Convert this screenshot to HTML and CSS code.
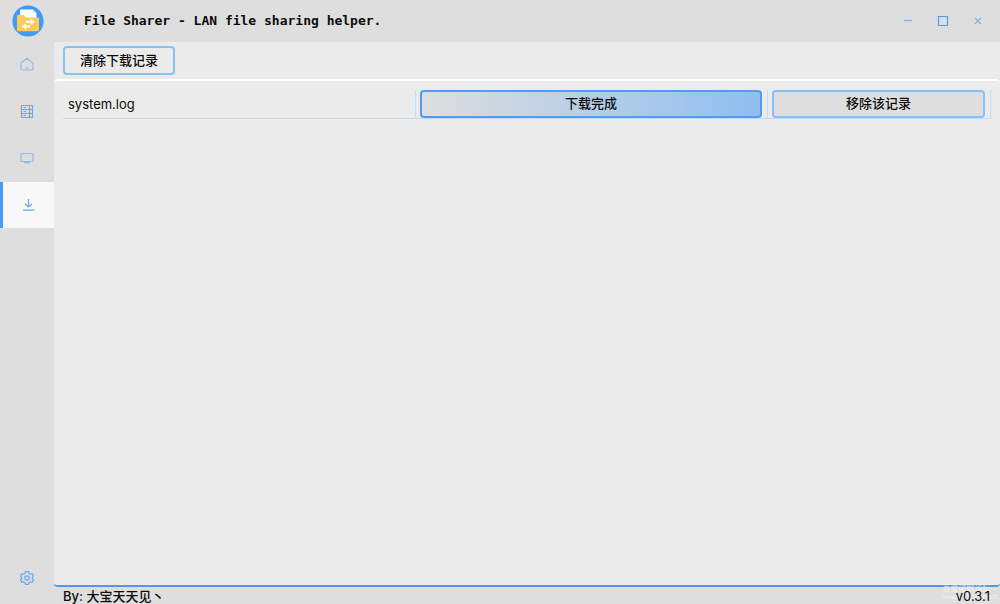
FILE: index.html
```html
<!DOCTYPE html>
<html lang="zh-CN">
<head>
<meta charset="utf-8">
<title>File Sharer</title>
<link rel="stylesheet" href="styles.css">
</head>
<body>
<div class="app">
  <aside class="sidebar">
    <div class="brand">
      <svg class="logo" viewBox="0 0 32 32" aria-hidden="true">
        <circle cx="16" cy="16" r="15.6" fill="#3f9bf5"/>
        <path d="M8 5.500Q8 4.500 9 4.500H21L24.500 8V16H8Z" fill="#fff"/>
        <path d="M21 4.500V8H24.500Z" fill="#cfe4fa"/>
        <path d="M5 11.200Q5 10 6.200 10H12L14 12.500H25.800Q27 12.500 27 13.700V25Q27 26.300 25.700 26.300H6.300Q5 26.300 5 25Z" fill="#fdcb5a"/>
        <path d="M14 15.800H18.500V13.800L22.800 16.900 18.500 19.800V17.800H14ZM18 20.500H14V18.500L9.700 21.600 14 24.500V22.500H18Z" fill="#fff"/>
      </svg>
    </div>
    <nav class="nav">
      <button class="nav-item" type="button" aria-label="主页">
        <svg class="icon" viewBox="0 0 14 14"><path d="M1 6 7 1.300 13 6V11.500Q13 13 11.500 13H2.500Q1 13 1 11.500ZM5 11H9"/></svg>
      </button>
      <button class="nav-item" type="button" aria-label="文件列表">
        <svg class="icon strong" viewBox="0 0 14 14"><path d="M1.500 1.500H12.500V13.500H1.500ZM1.500 5.500H12.500M1.500 9.500H12.500M9.500 1.500V13.500M3.500 3.500H6M3.500 7.500H6M3.500 11.500H6"/></svg>
      </button>
      <button class="nav-item" type="button" aria-label="客户端">
        <svg class="icon" viewBox="0 0 14 14"><path d="M2 2.500H12Q13 2.500 13 3.500V9.500Q13 10.500 12 10.500H2Q1 10.500 1 9.500V3.500Q1 2.500 2 2.500ZM4 11.700H10"/></svg>
      </button>
      <button class="nav-item active" type="button" aria-label="下载">
        <svg class="icon strong" viewBox="0 0 14 14"><path d="M6.500 1V9M3 5.700 6.500 9 10 5.700M1 12.200H12.500"/></svg>
      </button>
    </nav>
    <button class="nav-item" type="button" aria-label="设置">
      <svg class="icon strong" viewBox="0 0 14 14"><path d="M5.500 .7H8.500L9.100 2.500 10.400 3.200 12.200 2.700 13.500 5.200 12.200 6.500V7.500L13.500 8.800 12.200 11.300 10.400 10.800 9.100 11.500 8.500 13.300H5.500L4.900 11.500 3.600 10.800 1.800 11.300 .5 8.800 1.800 7.500V6.500L.5 5.200 1.800 2.700 3.600 3.200 4.900 2.500Z"/><circle cx="7" cy="7" r="2.200"/></svg>
    </button>
  </aside>
  <div class="main">
    <header class="titlebar">
      <h1 class="title">File Sharer - LAN file sharing helper.</h1>
      <div class="window-controls">
        <button class="win" type="button" aria-label="最小化"><svg class="win-icon" viewBox="0 0 12 12"><path d="M2 5.500H10"/></svg></button>
        <button class="win" type="button" aria-label="最大化"><svg class="win-icon max" viewBox="0 0 12 12"><path d="M1.500 1.500H10.500V10.500H1.500Z"/></svg></button>
        <button class="win" type="button" aria-label="关闭"><svg class="win-icon" viewBox="0 0 12 12"><path d="M3 3 9 9M9 3 3 9"/></svg></button>
      </div>
    </header>
    <div class="toolbar">
      <button class="btn clear" type="button">清除下载记录</button>
    </div>
    <main class="panel">
      <table class="records">
        <colgroup><col class="col-name"><col class="col-state"><col class="col-action"></colgroup>
        <tbody>
          <tr>
            <td class="name">system.log</td>
            <td><button class="btn done" type="button">下载完成</button></td>
            <td><button class="btn" type="button">移除该记录</button></td>
          </tr>
        </tbody>
      </table>
    </main>
    <footer class="footer">
      <span>By: 大宝天天见丶</span>
      <div class="watermark">吾爱破解论坛<br>www.52pojie.cn</div>
      <span class="version">v0.3.1</span>
    </footer>
  </div>
</div>
</body>
</html>
```
FILE: styles.css
```css
* {
  box-sizing: border-box;
}

body {
  margin: 0;
  background: #dedede;
  color: #0c0c0c;
  font: 500 13px/16px Inter, "Noto Sans CJK SC", sans-serif;
}

button {
  margin: 0;
  color: inherit;
  font: inherit;
}

.app {
  display: flex;
  height: 100vh;
  overflow: hidden;
}

.sidebar {
  display: flex;
  flex-direction: column;
  flex: none;
  width: 54px;
  padding-bottom: 3px;
}

.brand {
  height: 41px;
  padding: 5px 0 0 12px;
}

.logo {
  display: block;
  width: 32px;
  height: 32px;
}

.nav {
  display: flex;
  flex: 1;
  flex-direction: column;
  gap: 1px;
}

.nav-item {
  display: flex;
  align-items: center;
  justify-content: center;
  width: 100%;
  height: 46px;
  padding: 0;
  border: 0;
  background: none;
}

.nav-item.active {
  border-left: 3px solid #4799fa;
  background: #f8f8f8;
}

.icon {
  width: 14px;
  height: 14px;
  fill: none;
  stroke: #8dbbec;
  stroke-width: 1.2;
}

.icon.strong {
  stroke: #69a9ee;
}

.main {
  display: flex;
  flex: 1;
  flex-direction: column;
  min-width: 0;
}

.titlebar {
  display: flex;
  align-items: center;
  justify-content: space-between;
  height: 42px;
  padding: 0 5px 0 30px;
}

.title {
  margin: 0;
  font: bold 13px/16px "DejaVu Sans Mono", monospace;
}

.window-controls {
  display: flex;
}

.win {
  display: flex;
  align-items: center;
  justify-content: center;
  width: 35px;
  height: 40px;
  padding: 0;
  border: 0;
  background: none;
}

.win-icon {
  width: 12px;
  height: 12px;
  fill: none;
  stroke: #7db1ed;
  stroke-width: 1.2;
}

.win-icon.max {
  stroke: #4f9bf0;
}

.toolbar {
  padding: 4px 9px;
  background: #ebebeb;
}

.btn {
  display: block;
  width: 100%;
  height: 28px;
  padding: 0 0 2px;
  border: 2px solid #87c1f7;
  border-radius: 4px;
  background: #dedede;
}

.btn.clear {
  width: 112px;
  height: 29px;
  background: #ebebeb;
}

.btn.done {
  border-color: #509cf0;
  background: linear-gradient(90deg, #dedede, #8fbef0);
}

.panel {
  flex: 1;
  padding: 9px 9px 0;
  border-top: 2px solid #fff;
  border-bottom: 2px solid #4f9ae8;
  border-radius: 4px;
  background: #ebebeb;
}

.records {
  width: 100%;
  border-collapse: separate;
  border-spacing: 0;
  table-layout: fixed;
}

.col-name,
.col-state {
  width: 38%;
}

.col-action {
  width: 24%;
}

.records td {
  padding: 0 5px 0 4px;
  border-right: 1px solid #c4dcf3;
  border-bottom: 1px solid #c4dcf3;
}

.records .name {
  padding-left: 5px;
  font-weight: 400;
}

.footer {
  position: relative;
  display: flex;
  justify-content: space-between;
  height: 17px;
  padding: 1px 10px 0 9px;
}

.version {
  position: relative;
  font-weight: 400;
}

.watermark {
  position: absolute;
  right: 2px;
  bottom: 3px;
  color: #f7f7f7;
  font: 8px/8px "Liberation Sans", "Noto Sans CJK SC", sans-serif;
  opacity: 0.8;
}
```
